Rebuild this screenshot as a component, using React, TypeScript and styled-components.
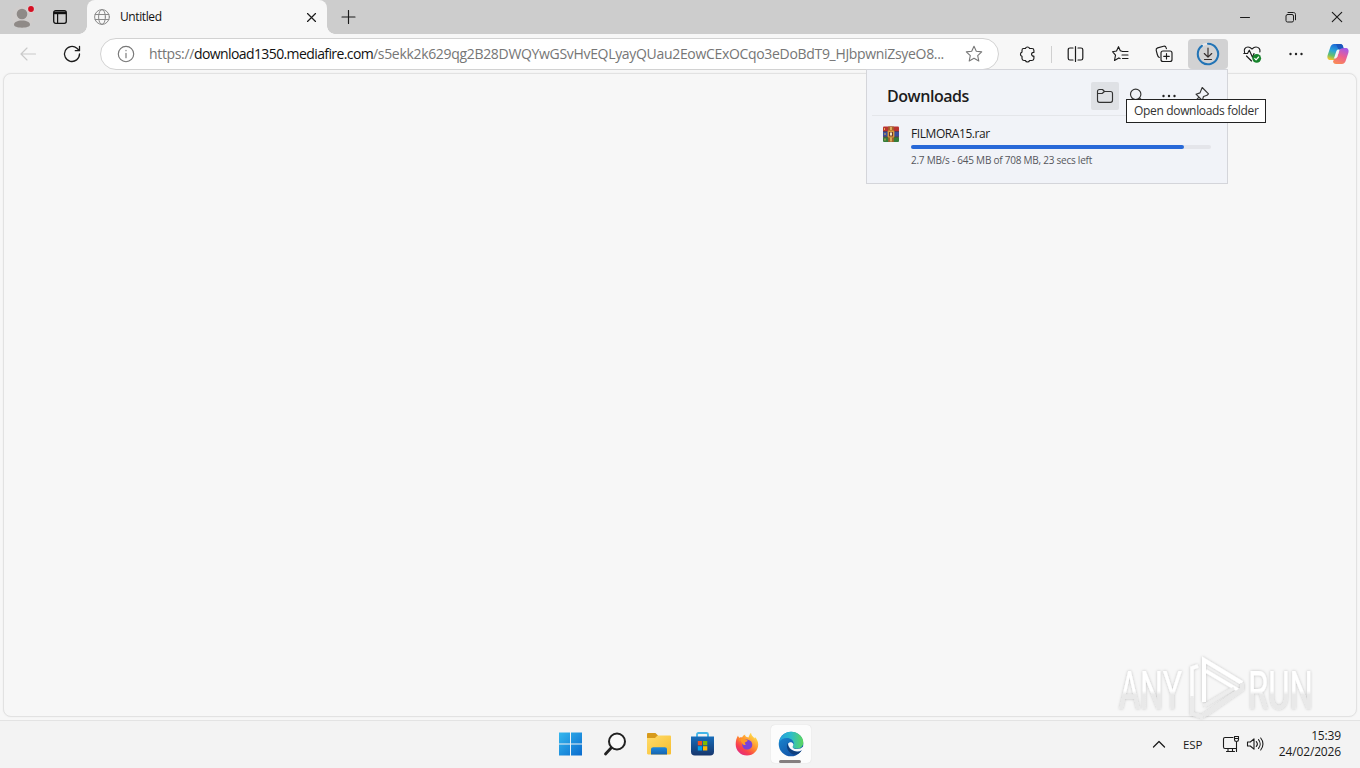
import React from "react";
import styled, { createGlobalStyle } from "styled-components";

const GlobalStyle = createGlobalStyle`
  * { box-sizing: border-box; }
  body {
    margin: 0;
    overflow: hidden;
    background: #f7f7f7;
    font-family: "Open Sans", "Noto Sans", sans-serif;
    color: #1b1b1b;
  }
  svg { display: block; flex: none; }
`;

const Desktop = styled.div`
  display: flex;
  flex-direction: column;
  width: 1360px;
  height: 768px;
  overflow: hidden;
  background: #f7f7f7;
`;

const TabStrip = styled.div`
  display: flex;
  align-items: center;
  height: 34px;
  background: #cdcdcd;
`;

const StripActions = styled.div`
  display: flex;
  align-items: center;
  width: 87px;
  height: 34px;
  padding-left: 11px;
  gap: 18px;
`;

const Tab = styled.div`
  position: relative;
  display: flex;
  align-items: center;
  width: 240px;
  height: 34px;
  padding: 0 10px 0 7px;
  background: #f7f7f7;
  border-radius: 8px 8px 0 0;

  &::before,
  &::after {
    content: "";
    position: absolute;
    bottom: 0;
    width: 8px;
    height: 8px;
  }
  &::before {
    left: -8px;
    background: radial-gradient(circle at 0 0, transparent 7.5px, #f7f7f7 8px);
  }
  &::after {
    right: -8px;
    background: radial-gradient(circle at 100% 0, transparent 7.5px, #f7f7f7 8px);
  }
`;

const TabTitle = styled.span`
  flex: 1;
  margin: -1px 0 0 10px;
  font-size: 12px;
  letter-spacing: -0.4px;
  color: #111;
`;

const NewTab = styled.div`
  margin-left: 14px;
  flex: 1;
`;

const WindowButton = styled.div`
  display: flex;
  align-items: center;
  justify-content: center;
  width: 46px;
  height: 34px;
`;

const Toolbar = styled.div`
  display: flex;
  align-items: center;
  height: 39px;
  padding: 1px 0 0 8px;
`;

const ToolButton = styled.div<{ $active?: boolean }>`
  display: flex;
  align-items: center;
  justify-content: center;
  width: 40px;
  height: 30px;
  margin-right: 4px;
  border-radius: 4px;
  background: ${(p) => (p.$active ? "#d2d2d3" : "transparent")};
`;

const Divider = styled.div`
  width: 1px;
  height: 17px;
  margin-right: 4px;
  background: #d0d0d0;
`;

const AddressBar = styled.div`
  display: flex;
  align-items: center;
  width: 899px;
  height: 32px;
  margin: 0 8px 0 4px;
  padding: 0 15px 0 16px;
  border: 1px solid #d2d2d2;
  border-radius: 16px;
  background: #fff;
`;

const Url = styled.div`
  display: flex;
  flex: 1;
  margin-left: 14px;
  font-size: 14px;
  line-height: 20px;
  white-space: nowrap;
  color: #767676;
`;

const UrlPart = styled.span<{ $width: number; $spacing?: number; $strong?: boolean }>`
  width: ${(p) => p.$width}px;
  letter-spacing: ${(p) => p.$spacing || 0}px;
  color: ${(p) => (p.$strong ? "#111" : "inherit")};
`;

const PageFrame = styled.div`
  position: relative;
  flex: 1;
  margin: 0 3px 3px;
  border: 1px solid #e2e2e2;
  border-radius: 8px;
  box-shadow: 0 0 2px rgba(0, 0, 0, 0.06);
  background: #f7f7f7;
`;

const DownloadsPanel = styled.div`
  position: absolute;
  top: -5px;
  left: 862px;
  width: 362px;
  height: 115px;
  border: 1px solid #d4d5da;
  background: #f1f3f8;
  z-index: 2;
`;

const PanelHeader = styled.div`
  display: flex;
  align-items: center;
  height: 46px;
  margin-left: 5px;
  padding: 6px 12px 0 15px;
  border-bottom: 1px solid #e4e6ea;
`;

const PanelTitle = styled.h1`
  flex: 1;
  margin: 0;
  font-size: 16px;
  line-height: 22px;
  font-weight: 600;
  letter-spacing: -0.45px;
  color: #1c1c20;
`;

const PanelButton = styled.div<{ $hovered?: boolean }>`
  display: flex;
  align-items: center;
  justify-content: center;
  width: 28px;
  height: 28px;
  margin-left: 4px;
  border-radius: 2px;
  background: ${(p) => (p.$hovered ? "#dfe1e5" : "transparent")};
`;

const DownloadItem = styled.div`
  display: flex;
  gap: 12px;
  padding: 10px 16px 0;
`;

const ItemBody = styled.div`
  width: 300px;
`;

const FileName = styled.div`
  font-size: 12px;
  line-height: 16px;
  letter-spacing: -0.42px;
  color: #1c1c20;
`;

const Track = styled.div`
  height: 4px;
  margin-top: 3px;
  border-radius: 2px;
  background: #e4e5ea;
`;

const Bar = styled.div`
  height: 4px;
  border-radius: 2px;
  background: #2869d8;
`;

const Status = styled.div`
  margin-top: 4px;
  font-size: 10px;
  line-height: 14px;
  letter-spacing: -0.24px;
  white-space: nowrap;
  color: #55565c;
`;

const Tooltip = styled.div`
  position: absolute;
  top: 25px;
  left: 1122px;
  width: 140px;
  height: 24px;
  padding-left: 7px;
  border: 1px solid #222;
  background: #fff;
  font-size: 12px;
  line-height: 22px;
  letter-spacing: -0.33px;
  white-space: nowrap;
  color: #333;
  z-index: 3;
`;

const Watermark = styled.div`
  position: absolute;
  right: 33px;
  bottom: -10px;
  z-index: 1;
`;

const Taskbar = styled.div`
  display: grid;
  grid-template-columns: 1fr auto 1fr;
  height: 48px;
  border-top: 1px solid #e3e3e3;
  background: #f3f3f3;
`;

const Apps = styled.div`
  grid-column: 2;
  display: flex;
  align-items: center;
  gap: 4px;
  margin-left: 1px;
  padding-bottom: 1px;
`;

const AppButton = styled.div<{ $running?: boolean }>`
  position: relative;
  display: flex;
  align-items: center;
  justify-content: center;
  width: 40px;
  height: 38px;
  border-radius: 4px;
  background: ${(p) => (p.$running ? "#fcfcfc" : "transparent")};
  box-shadow: ${(p) => (p.$running ? "0 0 1px #ccc" : "none")};

  &::after {
    content: "";
    display: ${(p) => (p.$running ? "block" : "none")};
    position: absolute;
    bottom: 0;
    left: 8px;
    width: 22px;
    height: 3px;
    border-radius: 2px;
    background: #857f80;
  }
`;

const Tray = styled.div`
  display: flex;
  align-items: center;
  justify-content: flex-end;
  padding: 0 19px 1px 0;
  font-size: 12px;
`;

const Language = styled.span`
  margin: 1px 18px 0 17px;
  width: 21px;
  font-size: 11.5px;
  letter-spacing: -0.1px;
`;

const VolumeSlot = styled.div`
  margin-left: 6px;
`;

const Clock = styled.div`
  width: 66px;
  margin-left: 11px;
  line-height: 16px;
  letter-spacing: -0.15px;
  text-align: right;
  white-space: nowrap;
`;

const CopilotSlot = styled.div`
  margin-left: 6px;
`;

interface StrokeProps {
  w?: number;
  h?: number;
  color?: string;
  thickness?: number;
  children: React.ReactNode;
}

const Stroke: React.FC<StrokeProps> = ({ w = 20, h = 20, color = "#1b1b1b", thickness = 1.15, children }) => (
  <svg
    width={w}
    height={h}
    viewBox={`0 0 ${w} ${h}`}
    fill="none"
    stroke={color}
    strokeWidth={thickness}
    strokeLinecap="round"
    strokeLinejoin="round"
  >
    {children}
  </svg>
);

const Dots: React.FC<{ size?: number }> = ({ size = 1.2 }) => (
  <svg width="20" height="20" viewBox="0 0 20 20" fill="#222">
    <circle cx="4.5" cy="10" r={size} />
    <circle cx="10" cy="10" r={size} />
    <circle cx="15.5" cy="10" r={size} />
  </svg>
);

const ProfileIcon = () => (
  <svg width="24" height="28" viewBox="0 0 24 28">
    <circle cx="11.5" cy="14" r="11" fill="#d0cdcc" />
    <circle cx="11" cy="11" r="5.3" fill="#8f8a87" />
    <path d="M3 21.8c0-2.600 3.200-4.300 8-4.300s8 1.700 8 4.300c0 1.700-3.200 2.900-8 2.900s-8-1.200-8-2.900z" fill="#8f8a87" />
    <circle cx="20" cy="6" r="3.600" fill="#e9cfd2" />
    <circle cx="20" cy="6" r="2.900" fill="#d40f22" />
  </svg>
);

const WorkspaceIcon = () => (
  <svg width="14" height="14" viewBox="0 0 14 14">
    <rect x="0.700" y="0.700" width="12.600" height="12.600" rx="2" fill="none" stroke="#111" strokeWidth="1.300" />
    <path d="M1 1.500h12v2.700H1z" fill="#111" />
    <path d="M4.600 4v9" stroke="#111" strokeWidth="1.200" />
  </svg>
);

const WinrarIcon = () => (
  <svg width="16" height="17" viewBox="0 0 16 17">
    <rect x="0" y="0.500" width="16" height="5" rx="1" fill="#b93230" />
    <rect x="0" y="5.500" width="16" height="5.300" fill="#3a4f9c" />
    <rect x="0" y="10.800" width="16" height="5.200" rx="1" fill="#357d3a" />
    <path d="M0 5.500h16M0 10.800h16" stroke="#4b2a45" strokeWidth="0.800" />
    <path d="M1.500 2v2M2 7v2M2 12.500v2" stroke="#e7b04b" strokeWidth="1" />
    <rect x="5.200" y="0.500" width="5.600" height="15.500" fill="#a5622b" />
    <rect x="4.600" y="4.600" width="6.800" height="7" rx="1" fill="#d99a3d" />
    <rect x="6" y="6" width="4" height="4.400" fill="#6d3a29" />
    <rect x="7" y="6.500" width="2" height="3" fill="#f4e3c2" />
    <path d="M8 11.500v4M8 1v3" stroke="#f0c870" strokeWidth="1.400" />
  </svg>
);

const CopilotIcon = () => (
  <svg width="24" height="24" viewBox="0 0 24 24">
    <defs>
      <linearGradient id="cpA" x1="0.600" y1="0" x2="0.300" y2="1">
        <stop offset="0" stopColor="#1b63d8" />
        <stop offset="0.450" stopColor="#2ba5d8" />
        <stop offset="0.750" stopColor="#68c06b" />
        <stop offset="1" stopColor="#f2c52c" />
      </linearGradient>
      <linearGradient id="cpB" x1="0.700" y1="0" x2="0.300" y2="1">
        <stop offset="0" stopColor="#a55ae8" />
        <stop offset="0.500" stopColor="#ed5f90" />
        <stop offset="1" stopColor="#f98a56" />
      </linearGradient>
    </defs>
    <path d="M15.500 7.500 17 4.500c-.6-1.800-1.400-2.500-3-2.500H8.200C6 2 4.900 3.300 4.200 5.400L1.700 13c-.9 3 .2 5 2.800 5h3.300c1.700 0 2.500-1.200 3-2.800l1.500-5c.6-1.800 1.500-2.700 3.200-2.700z" fill="url(#cpA)" />
    <path d="m8.500 16.500-1.500 3c.6 1.800 1.400 2.500 3 2.500h5.800c2.200 0 3.300-1.300 4-3.400l2.500-7.600c.9-3-.2-5-2.800-5h-3.300c-1.700 0-2.500 1.200-3 2.800l-1.500 5c-.6 1.800-1.500 2.700-3.200 2.700z" fill="url(#cpB)" />
    <path d="M10 2h4.500c1.500 0 2.200.9 2.700 2.600l.5 1.600h-1.500c-1.800 0-2.600 1-3.100 2.700z" fill="#1c58bd" />
    <path d="m10.300 9.200-1.800 5.600c-.2.800-.5 1.400-.8 1.800h1c1.300 0 2.200-.8 2.700-2.300l2.300-6.900h-1c-1.200 0-2 .5-2.400 1.800z" fill="#f4f3f6" />
  </svg>
);

const StartIcon = () => (
  <svg width="24" height="24" viewBox="0 0 24 24">
    <defs>
      <linearGradient id="win" x1="0" y1="0" x2="1" y2="1">
        <stop offset="0" stopColor="#35b8ee" />
        <stop offset="1" stopColor="#0a6bce" />
      </linearGradient>
    </defs>
    <path d="M0 .500h11v11H0zM12 .500h11v11H12zM0 12.500h11v11H0zM12 12.500h11v11H12z" fill="url(#win)" />
  </svg>
);

const ExplorerIcon = () => (
  <svg width="26" height="24" viewBox="0 0 26 24">
    <defs>
      <linearGradient id="fold" x1="0" y1="0" x2="1" y2="1">
        <stop offset="0" stopColor="#ffdc6b" />
        <stop offset="1" stopColor="#f7bd2e" />
      </linearGradient>
      <linearGradient id="foldBlue" x1="0" y1="0" x2="0" y2="1">
        <stop offset="0" stopColor="#1e88dd" />
        <stop offset="1" stopColor="#1763ad" />
      </linearGradient>
    </defs>
    <path d="M1 2.200C1 1.400 1.500 1 2.200 1h7.200l2.600 2.500V7H1z" fill="#d79a1b" />
    <path d="M1 6h8l2.500-2.500h12.300c.8 0 1.200.5 1.200 1.200v16.600c0 .8-.5 1.200-1.200 1.200H2.200C1.500 22.500 1 22 1 21.300z" fill="url(#fold)" />
    <path d="M5 22.500v-5c0-1.300.9-2.200 2.200-2.200h11.600c1.300 0 2.200.9 2.200 2.200v5z" fill="url(#foldBlue)" />
  </svg>
);

const StoreIcon = () => (
  <svg width="24" height="26" viewBox="0 0 24 26">
    <defs>
      <linearGradient id="store" x1="0" y1="0" x2="0" y2="1">
        <stop offset="0" stopColor="#176dbb" />
        <stop offset="1" stopColor="#17366c" />
      </linearGradient>
    </defs>
    <path d="M6 6V3.500C6 2.500 6.500 2 7.500 2h8c1 0 1.500.5 1.500 1.500V6" fill="none" stroke="#43b5e8" strokeWidth="1.800" />
    <path d="M0 5.500h23v15.200c0 2.500-1.300 3.800-3.800 3.800H3.800C1.300 24.500 0 23.200 0 20.700z" fill="url(#store)" />
    <path d="M6.800 10h4.300v4.300H6.800z" fill="#f25022" />
    <path d="M12 10h4.300v4.300H12z" fill="#7fba00" />
    <path d="M6.800 15.200h4.300v4.300H6.800z" fill="#00a4ef" />
    <path d="M12 15.200h4.300v4.300H12z" fill="#ffb900" />
  </svg>
);

const FirefoxIcon = () => (
  <svg width="24" height="24" viewBox="0 0 24 24">
    <defs>
      <linearGradient id="fox" x1="0.850" y1="0.100" x2="0.200" y2="0.950">
        <stop offset="0" stopColor="#ffe14a" />
        <stop offset="0.450" stopColor="#ff8c2e" />
        <stop offset="0.750" stopColor="#f9414d" />
        <stop offset="1" stopColor="#e12b80" />
      </linearGradient>
    </defs>
    <path d="M3 3.500c.2 1.400.8 2 1.500 2.400.8-.4 1.600-.5 2.500-.4C7.800 3.900 8.900 3 10.200 2.500c-.3 1 .2 1.800 1 2.300l2.300.7c.5-1.800 1.200-3.500 2.500-4.700.2 2.200 1.500 3.300 2.800 4.800l.8.9.3-1.500c2 2 3.300 4.500 3.300 7.500C23.200 18.600 18.300 23.500 12 23.500S.7 18.600.7 12.500C.7 9 1.500 5.800 3 3.500z" fill="url(#fox)" />
    <path d="M7.200 11.500c.6-3 2.800-4.300 5.700-3.800 2.800.5 4.600 2.600 4.400 5.300-.2 2.800-2.400 4.600-5.200 4.600-2.900 0-5.200-2.300-4.900-6.100z" fill="#7a42d8" />
    <path d="M4.500 7c1.800-1 3.800-.8 5.300.5 1.100.2 2.300.2 2.700.8.300 1-1.200 1.800-2.600 2.200-.3.800.3 1.500 1.100 1.800-1 1.200-3 .8-3.700-.8z" fill="#ff9a25" />
    <path d="M3 3.500c.2 1.400.8 2 1.500 2.400.8-.4 1.600-.5 2.500-.4L4 10z" fill="#ff862e" />
  </svg>
);

const EdgeIcon = () => (
  <svg width="26" height="26" viewBox="0 0 26 26">
    <defs>
      <linearGradient id="edgeTop" x1="0" y1="0.500" x2="1" y2="0.500">
        <stop offset="0" stopColor="#269fdd" />
        <stop offset="0.500" stopColor="#2cbcc9" />
        <stop offset="1" stopColor="#5cd65c" />
      </linearGradient>
      <linearGradient id="edgeLeft" x1="0" y1="0" x2="0.700" y2="1">
        <stop offset="0" stopColor="#1b8fd6" />
        <stop offset="1" stopColor="#124fa4" />
      </linearGradient>
    </defs>
    <circle cx="13" cy="13" r="12.300" fill="url(#edgeLeft)" />
    <path d="M.9 11.500C2 5.100 7 .7 13.200.7c6.800 0 12.100 5 12.100 10.600 0 4-2.800 6.400-6.500 6.400-2.500 0-4.200-.9-4.200-1.900 0-.7 1.200-1.200 1.200-3.300 0-3.200-3.200-5.600-6.900-5.600-3.600 0-6.700 1.900-8 4.600z" fill="url(#edgeTop)" />
    <path d="M9.500 11.800c-1.700 4.500.3 9.500 5.700 11.700 3.300.7 6.700-1.100 8.600-4.200-2.200 1.300-5 1.600-7.500.8-4.100-1.200-6.700-4.400-6.800-8.300z" fill="#0f3f7e" />
    <path d="M15 15c-.4.500-.5.900-.2 1.400.8 1.200 2.500 1.700 4.300 1.600 2.500 0 4.500-.7 5.400-2.200l1.500 2.200-2.200 1.300c-2.200 1.300-5 1.600-7.500.8-3.600-1.200-6-4-6.300-7.300.8-1.500 2.500-2 3.900-1.300 1.500.7 2 2.100 1.100 3.500z" fill="#f7f9fb" />
  </svg>
);

const AnyRunMark = () => (
  <svg width="208" height="74" viewBox="0 0 208 74">
    <defs>
      <linearGradient id="wmText" x1="0" y1="0" x2="0" y2="1">
        <stop offset="0.500" stopColor="#ffffff" />
        <stop offset="0.560" stopColor="#e9e9e9" />
      </linearGradient>
      <filter id="wmShadow" x="-10%" y="-10%" width="120%" height="125%">
        <feDropShadow dx="0" dy="0" stdDeviation="1.800" floodColor="#000" floodOpacity="0.240" />
      </filter>
    </defs>
    <g filter="url(#wmShadow)">
      <g fill="url(#wmText)" fontFamily="Roboto, sans-serif" fontSize="53" fontWeight="400">
        <text transform="translate(4 57) scale(0.610 1)">ANY</text>
        <text transform="translate(133 57) scale(0.620 1)">RUN</text>
      </g>
      <path d="M83 14l-6 2v30" fill="none" stroke="#fdfdfd" strokeWidth="3.500" />
      <path d="M77 44v18l11 3" fill="none" stroke="#ebebeb" strokeWidth="3.500" />
      <path d="M89 50V8l38 23" fill="none" stroke="#fff" strokeWidth="4" />
      <path d="M91 19l32 19" fill="none" stroke="#fff" strokeWidth="3.500" />
      <path d="M89 54l30-18" fill="none" stroke="#ededed" strokeWidth="3" />
      <path d="M127 31v6L88 64" fill="none" stroke="#e9e9e9" strokeWidth="4" />
    </g>
  </svg>
);

const App: React.FC = () => {
  const received = 645;
  const total = 708;

  return (
    <Desktop>
      <GlobalStyle />
      <TabStrip>
        <StripActions>
          <ProfileIcon />
          <WorkspaceIcon />
        </StripActions>
        <Tab>
          <Stroke w={16} h={16} color="#8a8a8a" thickness={1}>
            <circle cx="8" cy="8" r="7.400" />
            <ellipse cx="8" cy="8" rx="3.400" ry="7.400" />
            <path d="M1.200 5.500h13.600M1.200 10.500h13.600" />
          </Stroke>
          <TabTitle>Untitled</TabTitle>
          <Stroke w={11} h={11}>
            <path d="M1.500 1.500l8 8M9.500 1.500l-8 8" />
          </Stroke>
        </Tab>
        <NewTab>
          <Stroke w={15} h={15}>
            <path d="M7.500 .5v13M1 7h13" />
          </Stroke>
        </NewTab>
        <WindowButton>
          <Stroke thickness={1}>
            <path d="M5.500 10.500h9" />
          </Stroke>
        </WindowButton>
        <WindowButton>
          <Stroke thickness={1}>
            <rect x="5" y="7.500" width="7.500" height="7.500" rx="1.500" />
            <path d="M7 5.500h5.500c1.200 0 2 .8 2 2v5.300" />
          </Stroke>
        </WindowButton>
        <WindowButton>
          <Stroke>
            <path d="M5.300 5.300l9.400 9.400M14.700 5.300l-9.400 9.400" />
          </Stroke>
        </WindowButton>
      </TabStrip>

      <Toolbar>
        <ToolButton>
          <Stroke color="#c9c9c9">
            <path d="M17.500 10H3M9 4l-6 6 6 6" />
          </Stroke>
        </ToolButton>
        <ToolButton>
          <Stroke thickness={1.300}>
            <path d="M17.500 10a7.500 7.500 0 1 1-2.600-5.700L17 6.200M17.500 2.500v4.200h-4.200" />
          </Stroke>
        </ToolButton>
        <AddressBar>
          <Stroke w={18} h={18} color="#777">
            <circle cx="9" cy="9" r="7.700" />
            <path d="M9 8.200v4.500M9 5.400v.3" />
          </Stroke>
          <Url>
            <UrlPart $width={45} $spacing={-0.35}>https://</UrlPart>
            <UrlPart $width={179} $spacing={-0.6} $strong>download1350.mediafire.com</UrlPart>
            <UrlPart $width={574} $spacing={-0.32}>/s5ekk2k629qg2B28DWQYwGSvHvEQLyayQUau2EowCExOCqo3eDoBdT9_HJbpwniZsyeO8...</UrlPart>
          </Url>
          <Stroke w={18} h={18} color="#777" thickness={1.100}>
            <path d="M9 1.300l2.300 5 5.400.6-4 3.700 1.100 5.400L9 13.300 4.200 16l1.100-5.400-4-3.700 5.400-.6z" />
          </Stroke>
        </AddressBar>
        <ToolButton>
          <Stroke>
            <path d="M6.500 4.500h1.900a2.200 2.200 0 0 1 4.200 0h2.400c1.100 0 1.900.8 1.900 1.900v2a1.900 1.900 0 1 0 0 3.700v2.500c0 1.100-.8 1.900-1.900 1.900h-2.400a2.200 2.200 0 0 1-4.200 0H6.900c-1.100 0-1.900-.8-1.900-1.900v-2.300a2.200 2.200 0 0 1 0-4.200V6.400c0-1.100.6-1.900 1.500-1.900z" />
          </Stroke>
        </ToolButton>
        <Divider />
        <ToolButton>
          <Stroke thickness={1.200}>
            <path d="M7 4H4c-1.100 0-1.800.7-1.800 1.800v8.400c0 1.100.7 1.800 1.800 1.800h3M12 4h3c1.100 0 1.800.7 1.800 1.800v8.400c0 1.100-.7 1.800-1.800 1.800h-3M9.500 2.500v15" />
          </Stroke>
        </ToolButton>
        <ToolButton>
          <Stroke>
            <path d="M12 7.300L10.300 6.800 8.500 2.700 6.500 7l-4 .7 3 3.400-1 5.400 4.300-2.600 1.300.7M12.500 7.500H18M12 11h6M12.500 14.500H18" />
          </Stroke>
        </ToolButton>
        <ToolButton>
          <Stroke>
            <rect x="7" y="7" width="11" height="10.500" rx="2" />
            <path d="M12.500 9.500v5.500M9.700 12.300h5.600M5.300 13.500C4 13 3.700 12 3.300 10.500L2.200 6.300c-.3-1.200.2-2 1.400-2.400l6-1.600c1.200-.3 2.200.2 2.500 1.400l.3 1" />
          </Stroke>
        </ToolButton>
        <ToolButton $active>
          <Stroke w={24} h={24}>
            <circle cx="12" cy="12" r="10.200" stroke="#e6e6e8" strokeWidth="2" />
            <path d="M12 1.800A10.200 10.200 0 1 1 5.900 3.800" stroke="#2374b5" strokeWidth="2.100" />
            <path d="M12 6v9M8.300 11.500l3.700 3.700 3.700-3.700M8.500 17.500h7" stroke="#332c2b" />
          </Stroke>
        </ToolButton>
        <ToolButton>
          <Stroke>
            <path d="M9.500 17L4.500 12M2.600 8.500C1.400 5.500 3.300 3 6 3c1.700 0 3 1 4 2 1-1 2.300-2 4-2 2.600 0 4.500 2.200 3.900 5M1.800 9.500h3.700l1.800-3.300 3.200 7 1.500-3.700" />
            <circle cx="14.700" cy="14.300" r="4.400" fill="#17832c" stroke="none" />
            <path d="M12.700 14.400l1.400 1.400 2.500-2.800" stroke="#fff" />
          </Stroke>
        </ToolButton>
        <ToolButton>
          <Dots />
        </ToolButton>
        <CopilotSlot>
          <CopilotIcon />
        </CopilotSlot>
      </Toolbar>

      <PageFrame>
        <DownloadsPanel>
          <PanelHeader>
            <PanelTitle>Downloads</PanelTitle>
            <PanelButton $hovered>
              <Stroke color="#333">
                <path d="M2.500 5.500c0-1.200.8-2 2-2h3l2 2h6c1.200 0 2 .8 2 2v6.800c0 1.200-.8 2-2 2h-11c-1.200 0-2-.8-2-2zM2.500 7.500h4.600l2.400-2" />
              </Stroke>
            </PanelButton>
            <PanelButton>
              <Stroke color="#333">
                <circle cx="8.700" cy="8.300" r="5.200" />
                <path d="M12.700 12.200l4 4" />
              </Stroke>
            </PanelButton>
            <PanelButton>
              <Dots />
            </PanelButton>
            <PanelButton>
              <Stroke color="#333">
                <path d="M11.200 1.500l6.300 6.300-1.500 1.500-3.500 1.200-1.200 4L5 8.200l4-1.300zM8 11.200L3 16.500" />
              </Stroke>
            </PanelButton>
          </PanelHeader>
          <DownloadItem>
            <WinrarIcon />
            <ItemBody>
              <FileName>FILMORA15.rar</FileName>
              <Track>
                <Bar style={{ width: `${(received / total) * 100}%` }} />
              </Track>
              <Status>2.7 MB/s - {received} MB of {total} MB, 23 secs left</Status>
            </ItemBody>
          </DownloadItem>
        </DownloadsPanel>
        <Tooltip>Open downloads folder</Tooltip>
        <Watermark>
          <AnyRunMark />
        </Watermark>
      </PageFrame>

      <Taskbar>
        <Apps>
          <AppButton><StartIcon /></AppButton>
          <AppButton>
            <Stroke w={24} h={24} color="#222" thickness={2}>
              <circle cx="14" cy="9.500" r="8" fill="#fafafa" />
              <path d="M8.300 15.800L2.500 22" strokeWidth="2.800" />
            </Stroke>
          </AppButton>
          <AppButton><ExplorerIcon /></AppButton>
          <AppButton><StoreIcon /></AppButton>
          <AppButton><FirefoxIcon /></AppButton>
          <AppButton $running><EdgeIcon /></AppButton>
        </Apps>
        <Tray>
          <Stroke w={14} h={10} thickness={1.300}>
            <path d="M1.500 8L7 2.500 12.500 8" />
          </Stroke>
          <Language>ESP</Language>
          <Stroke w={18} h={18} thickness={1.100}>
            <path d="M11 2.500H3c-.8 0-1.500.7-1.500 1.500v8c0 .8.700 1.500 1.500 1.500h11.500M6 13.500V16M10.500 13.500V16M4.500 16.500h8M14.500 6.500v10M12.500 1.500h4v3.300c0 1-.8 1.700-2 1.700s-2-.7-2-1.700zM12.500 3.500h4" />
          </Stroke>
          <VolumeSlot>
            <Stroke w={18} h={18} thickness={1.100}>
              <path d="M1.500 7v4h2.800l3.700 3.200V3.800L4.300 7zM10.300 6.500c1.300 1.500 1.300 3.500 0 5M12.500 4.700c2.200 2.500 2.200 6.100 0 8.600M14.700 3c3 3.500 3 8.500 0 12" />
            </Stroke>
          </VolumeSlot>
          <Clock>
            15:39
            <br />
            24/02/2026
          </Clock>
        </Tray>
      </Taskbar>
    </Desktop>
  );
};

export default App;
